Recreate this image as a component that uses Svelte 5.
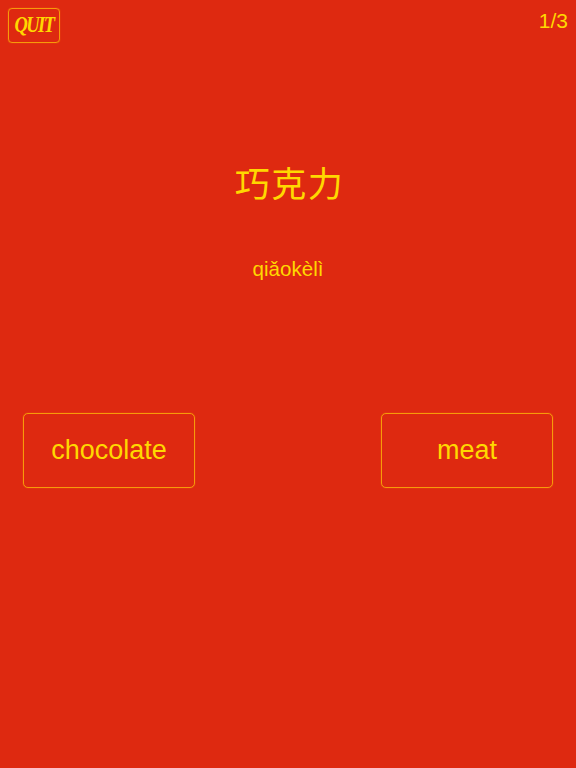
<script lang="ts">
  const options = ['chocolate', 'meat'];
</script>

<div class="screen">
  <header class="top">
    <button class="quit"><span>QUIT</span></button>
    <span class="count">1/3</span>
  </header>

  <div class="word">
    <h1 class="hanzi">巧克力</h1>
    <p class="pinyin">qiǎokèlì</p>
  </div>

  <div class="choices">
    {#each options as option}
      <button class="choice">{option}</button>
    {/each}
  </div>
</div>

<style>
  :global(body) {
    margin: 0;
    background: #de2910;
  }

  .screen {
    height: 768px;
    display: flex;
    flex-direction: column;
    background: #de2910;
    color: #ffd800;
    font-family: "Liberation Sans", "Noto Sans CJK SC", sans-serif;
    overflow: hidden;
  }

  .top {
    display: flex;
    justify-content: space-between;
    align-items: flex-start;
    padding: 8px 8px 0;
  }

  button {
    background: none;
    color: inherit;
    font-family: inherit;
    border: 1px solid #f79a0a;
    box-shadow: 0 0 1px #f79a0a;
    padding: 0;
  }

  .quit {
    width: 52px;
    height: 35px;
    border-radius: 4px;
    font-family: "Liberation Serif", serif;
    font-size: 18.5px;
    font-weight: 700;
    font-style: italic;
    letter-spacing: -1.5px;
  }

  .quit span {
    display: inline-block;
    transform: scaleY(1.25);
  }

  .count {
    font-size: 21px;
    line-height: 26px;
  }

  .word {
    display: flex;
    flex-direction: column;
    align-items: center;
    padding-top: 113px;
  }

  .hanzi {
    margin: 0;
    padding-left: 3px;
    font-family: "Noto Sans CJK SC", sans-serif;
    font-size: 35px;
    font-weight: 400;
    letter-spacing: 1.5px;
    line-height: 52px;
  }

  .pinyin {
    margin: 46px 0 0;
    font-size: 20.6px;
    line-height: 30px;
  }

  .choices {
    display: flex;
    justify-content: space-between;
    padding: 129px 23px 0;
  }

  .choice {
    width: 172px;
    height: 75px;
    border-radius: 5px;
    font-size: 27px;
  }
</style>
